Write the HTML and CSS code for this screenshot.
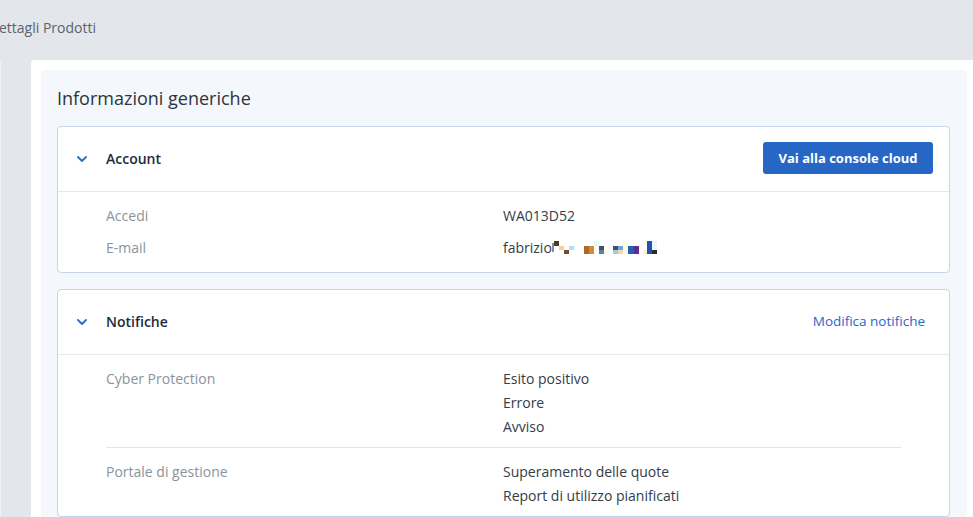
FILE: index.html
```html
<!DOCTYPE html>
<html lang="it">
<head>
<meta charset="utf-8">
<title>Dettagli Prodotti</title>
<link rel="stylesheet" href="styles.css">
</head>
<body>
<div class="topbar"><span class="crumb">ettagli Prodotti</span></div>
<div class="main">
  <div class="side"></div>
  <div class="sheet">
    <div class="panel">
      <h1 class="title">Informazioni generiche</h1>

      <section class="card">
        <div class="card-head">
          <svg class="chev" width="10" height="6" viewBox="0 0 10 6"><path d="M1 1 L5 5 L9 1" fill="none" stroke="#2a6ac8" stroke-width="1.8" stroke-linecap="round" stroke-linejoin="round"/></svg>
          <span class="card-title">Account</span>
          <button class="btn">Vai alla console cloud</button>
        </div>
        <div class="card-body rows">
          <div class="row"><span class="label">Accedi</span><span class="value">WA013D52</span></div>
          <div class="row"><span class="label">E-mail</span><span class="value">fabrizio<svg class="pix" width="120" height="14" viewBox="0 0 120 14">
            <rect x="-1" y="3" width="3" height="9" fill="#8a8f96"/>
            <rect x="2" y="1" width="5" height="5" fill="#4a3a30"/>
            <rect x="7" y="6" width="5" height="4" fill="#f6d09a"/>
            <rect x="12" y="10" width="5" height="4" fill="#7a4a30"/>
            <rect x="17" y="6" width="5" height="4" fill="#a6e2f8"/>
            <rect x="32" y="6" width="5" height="8" fill="#b06828"/>
            <rect x="37" y="6" width="5" height="8" fill="#d48c30"/>
            <rect x="42" y="1" width="5" height="5" fill="#e0fafc"/>
            <rect x="47" y="6" width="5" height="4" fill="#4a5252"/>
            <rect x="47" y="10" width="5" height="4" fill="#5282b2"/>
            <rect x="52" y="10" width="5" height="4" fill="#fcf8e4"/>
            <rect x="61" y="6" width="5" height="4" fill="#4c5252"/>
            <rect x="66" y="6" width="5" height="4" fill="#62aae8"/>
            <rect x="61" y="10" width="5" height="4" fill="#a2cae0"/>
            <rect x="66" y="10" width="5" height="4" fill="#f6d8b0"/>
            <rect x="71" y="1" width="5" height="13" fill="#fcfae4"/>
            <rect x="76" y="6" width="6" height="8" fill="#2262b2"/>
            <rect x="82" y="6" width="5" height="8" fill="#602a90"/>
            <rect x="91" y="10" width="4" height="4" fill="#fcf4c8"/>
            <rect x="95" y="1" width="5" height="13" fill="#2252aa"/>
            <rect x="100" y="1" width="5" height="9" fill="#e4fafc"/>
            <rect x="100" y="10" width="5" height="4" fill="#302a30"/>
          </svg></span></div>
        </div>
      </section>

      <section class="card">
        <div class="card-head">
          <svg class="chev" width="10" height="6" viewBox="0 0 10 6"><path d="M1 1 L5 5 L9 1" fill="none" stroke="#2a6ac8" stroke-width="1.8" stroke-linecap="round" stroke-linejoin="round"/></svg>
          <span class="card-title">Notifiche</span>
          <a class="link" href="#">Modifica notifiche</a>
        </div>
        <div class="card-body groups">
          <div class="group">
            <span class="label">Cyber Protection</span>
            <div class="values">
              <span class="value">Esito positivo</span>
              <span class="value">Errore</span>
              <span class="value">Avviso</span>
            </div>
          </div>
          <div class="group">
            <span class="label">Portale di gestione</span>
            <div class="values">
              <span class="value">Superamento delle quote</span>
              <span class="value">Report di utilizzo pianificati</span>
            </div>
          </div>
        </div>
      </section>
    </div>
  </div>
</div>
</body>
</html>
```

FILE: styles.css
```css
* { box-sizing: border-box; }
html, body { margin: 0; padding: 0; }
body {
  background: #e3e7eb;
  font-family: "Open Sans", "Liberation Sans", sans-serif;
  font-size: 14px;
  color: #2f3a45;
  width: 973px;
  height: 517px;
  overflow: hidden;
}
.topbar {
  height: 60px;
  display: flex;
  align-items: center;
  padding-bottom: 5px;
}
.crumb {
  font-size: 14px;
  color: #5a636c;
  margin-left: -1px;
}
.main {
  display: flex;
  height: 457px;
}
.side {
  width: 31px;
  flex: none;
  border-left: 1px solid #eef1f4;
}
.sheet {
  flex: 1;
  background: #ffffff;
  padding: 10px 6px 0 10px;
  border-top-left-radius: 3px;
}
.panel {
  background: #f4f7fb;
  height: 100%;
  border-radius: 4px 4px 0 0;
  padding: 0 17px 0 16px;
}
.title {
  margin: 0;
  font-size: 18px;
  font-weight: 400;
  color: #2b3540;
  line-height: 24px;
  padding: 16px 0 16px;
}
.card {
  background: #ffffff;
  border: 1px solid #c6d5ea;
  border-radius: 4px;
  margin-bottom: 16px;
}
.card-head {
  height: 65px;
  border-bottom: 1px solid #e3e9f1;
  display: flex;
  align-items: center;
  padding: 0 16px 2px 19px;
}
.chev { flex: none; margin-right: 19px; margin-top: 1px; }
.card-title {
  font-weight: 600;
  font-size: 14px;
  color: #1f2b37;
  flex: 1;
}
.btn {
  font-family: "Open Sans", "Liberation Sans", sans-serif;
  font-size: 13px;
  font-weight: 700;
  color: #ffffff;
  background: #2667c6;
  border: none;
  border-radius: 3px;
  height: 32px;
  width: 170px;
  padding: 0;
}
.link {
  color: #2667c6;
  text-decoration: none;
  font-size: 13.5px;
  margin-right: 8px;
}
.card-body { padding: 12px 48px 12px; }
.rows { display: flex; flex-direction: column; gap: 8px; }
.row, .group {
  display: grid;
  grid-template-columns: 397px 1fr;
  line-height: 24px;
}
.label { color: #8a939c; }
.value { color: #333d48; display: block; }
.row .value { display: flex; align-items: center; }
.pix { display: block; margin-top: -2px; }
.groups { padding: 0 48px 0; }
.group { padding: 12px 0 8px; }
.group + .group { border-top: 1px solid #dfe5ed; }
.values { display: flex; flex-direction: column; }
```
